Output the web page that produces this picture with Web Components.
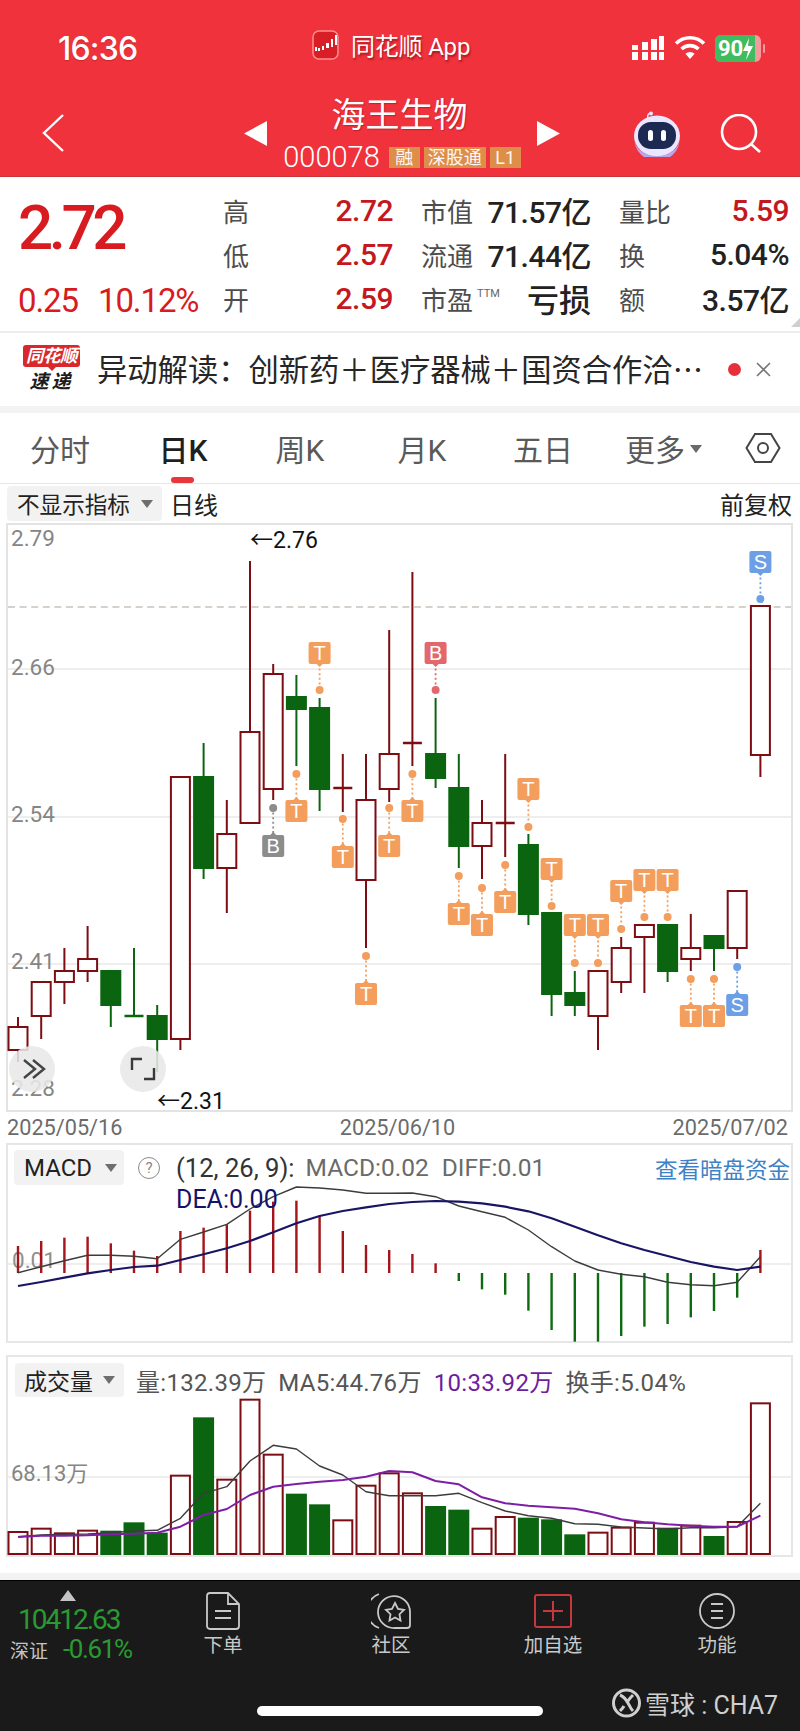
<!DOCTYPE html>
<html lang="zh">
<head>
<meta charset="utf-8">
<title>海王生物</title>
<style>
    html, body { margin: 0; padding: 0; background: #fff; }
    body {
        width: 800px;
        height: 1731px;
        overflow: hidden;
        font-family: Roboto, "Noto Sans CJK SC", sans-serif;
        color: #222;
    }
    .strip { display: block; height: 7px; background: #f3f3f3; }
    .gap { display: block; height: 15px; }
</style>
</head>
<body>
<stock-header></stock-header>
<quote-panel></quote-panel>
<news-ticker>异动解读：创新药＋医疗器械＋国资合作洽…</news-ticker>
<div class="strip"></div>
<period-tabs></period-tabs>
<chart-toolbar></chart-toolbar>
<kline-chart></kline-chart>
<date-axis></date-axis>
<macd-chart></macd-chart>
<volume-chart></volume-chart>
<div class="gap"></div>
<div class="strip"></div>
<bottom-nav></bottom-nav>

<script>
const FONT = 'Roboto, "Noto Sans CJK SC", sans-serif';
const UP = '#7c0d12';
const DOWN = '#0b640f';

const xAt = i => 18 + 23.2 * i;

function define(name, html) {
    customElements.define(name, class extends HTMLElement {
        constructor() {
            super();
            this.attachShadow({mode: 'open'}).innerHTML = typeof html === 'function' ? html(this) : html;
        }
    });
}

define('dropdown-pill', `
<style>
    :host {
        display: inline-flex;
        align-items: center;
        justify-content: space-between;
        box-sizing: border-box;
        padding: 0 9px 0 10px;
        background: #f2f2f2;
        border-radius: 4px;
        color: #222;
        font-size: 22.6px;
        white-space: nowrap;
    }
    i {
        flex: none;
        width: 0; height: 0;
        border-left: 6px solid transparent;
        border-right: 6px solid transparent;
        border-top: 8px solid #6e6e6e;
    }
</style>
<slot></slot><i></i>`);

define('stock-header', `
<style>
    :host {
        display: block;
        height: 177px;
        box-sizing: border-box;
        background: #ef323c;
        border-bottom: 1px solid #c9363c;
        color: #fff;
    }
    .status {
        height: 88px;
        display: grid;
        grid-template-columns: 254px 1fr auto;
        align-items: center;
        padding: 8px 35px 0 58px;
        box-sizing: border-box;
    }
    .time { font: 500 32px Inter, ${FONT}; letter-spacing: -.8px; text-shadow: 0 1px 1px rgba(120,0,0,.3); }
    .app { display: flex; align-items: center; gap: 12px; font-size: 24px; text-shadow: 1px 2px 2px rgba(110,0,0,.55); margin-top: -7px; }
    .app span { letter-spacing: -.2px; }
    .right { display: flex; justify-content: flex-end; align-items: center; gap: 9px; }
    .nav {
        height: 88px;
        display: grid;
        grid-template-columns: 244px 23px 270px 23px 1fr;
    }
    .back { padding: 25px 0 0 41px; }
    .tri { align-self: start; margin-top: 33px; }
    .mid { display: flex; flex-direction: column; align-items: center; }
    .name { font-size: 34px; line-height: 40px; margin: 7px 5px 0 0; text-shadow: 1px 1px 1px rgba(110,0,0,.35); }
    .code { display: flex; align-items: center; gap: 4px; margin-top: 9px; font-size: 29px; font-weight: 300; line-height: 26px; white-space: nowrap; }
    .code b {
        font: 400 18px ${FONT};
        background: #dd924a;
        width: 31px;
        height: 21px;
        line-height: 21px;
        text-align: center;
        opacity: .96;
    }
    .code b:first-of-type { margin-left: 5px; }
    .code b.wide { width: 62px; }
    .tools { display: flex; padding: 23px 0 0 72px; gap: 38px; align-items: flex-start; }
    .tools svg:last-child { margin-top: 3px; }
</style>
<div class="status">
    <div class="time">16:36</div>
    <div class="app">
        <svg width="27" height="30" viewBox="0 0 27 30">
            <rect x="1" y="1" width="25" height="28" rx="6" fill="#d81e26" stroke="#ff8e8e" stroke-width="1.5"/>
            <g fill="#fff"><rect x="3" y="17" width="2" height="4"/><rect x="6" y="18" width="2" height="3"/><rect x="10" y="16" width="2" height="4"/><rect x="14" y="13" width="3" height="5"/><rect x="19" y="9" width="2" height="8"/><rect x="23" y="5" width="2" height="10"/></g>
        </svg>
        <span>同花顺 App</span>
    </div>
    <div class="right">
        <svg width="34" height="26" viewBox="0 0 34 26" fill="#fff">
            <rect x="1" y="17" width="6" height="8"/><rect x="1" y="10" width="6" height="5"/>
            <rect x="11" y="17" width="6" height="8"/><rect x="11" y="7" width="6" height="8"/>
            <rect x="20" y="17" width="6" height="8"/><rect x="20" y="4" width="6" height="11"/>
            <rect x="28" y="17" width="5" height="8"/><rect x="28" y="1" width="5" height="14"/>
        </svg>
        <svg width="32" height="26" viewBox="0 0 32 26" fill="none" stroke="#fff" stroke-width="3.6">
            <path d="M2 8.5a20 20 0 0 1 28 0"/><path d="M7.5 14a12.5 12.5 0 0 1 17 0"/><path d="M16 24l-4.6-5.2a6.6 6.6 0 0 1 9.2 0z" fill="#fff" stroke="none"/>
        </svg>
        <svg width="50" height="27" viewBox="0 0 50 27">
            <rect x="0" y="0" width="46" height="27" rx="6" fill="#f49a9c"/>
            <path d="M6 0h34v27H6a6 6 0 0 1-6-6V6a6 6 0 0 1 6-6z" fill="#3fbc60"/>
            <text x="3" y="21" font-family="Roboto" font-weight="700" font-size="22" fill="#fff">90</text>
            <path d="M34 3l-6 13h5l-2 9 7-14h-5z" fill="#fff"/>
            <rect x="48" y="9" width="2" height="9" rx="1" fill="#f49a9c"/>
        </svg>
    </div>
</div>
<div class="nav">
    <div class="back">
        <svg width="24" height="40" viewBox="0 0 24 40" fill="none" stroke="#fff" stroke-width="2.4"><path d="M22 2L3 20l19 18"/></svg>
    </div>
    <svg class="tri" width="23" height="25" viewBox="0 0 23 25"><path d="M23 0v25L0 12.500z" fill="#fff"/></svg>
    <div class="mid">
        <div class="name">海王生物</div>
        <div class="code">000078<b>融</b><b class="wide">深股通</b><b>L1</b></div>
    </div>
    <svg class="tri" width="23" height="25" viewBox="0 0 23 25"><path d="M0 0v25l23-12.500z" fill="#fff"/></svg>
    <div class="tools">
        <svg width="50" height="46" viewBox="0 0 50 46">
            <path d="M17 10c-2-3-2-7 1-8" fill="none" stroke="#e8e4ff" stroke-width="1.500"/>
            <circle cx="19" cy="2.500" r="2" fill="#e8e4ff"/>
            <ellipse cx="25" cy="25" rx="23" ry="20.500" fill="#ebe6ff"/>
            <path d="M2 27a23 18 0 0 0 46 0 23 23 0 0 1-46 0z" fill="#b6a8ee"/>
            <rect x="6" y="11" width="38" height="27" rx="13" fill="#1c2a52"/>
            <rect x="16" y="19" width="5" height="11" rx="2.500" fill="#fff"/>
            <rect x="29" y="19" width="5" height="11" rx="2.500" fill="#fff"/>
        </svg>
        <svg width="42" height="40" viewBox="0 0 42 40" fill="none" stroke="#fff" stroke-width="2.600"><circle cx="19" cy="18" r="17"/><path d="M31 30l9 8"/></svg>
    </div>
</div>`);

define('quote-cell', el => `
<style>
    :host { display: flex; justify-content: space-between; align-items: center; white-space: nowrap; }
    .l { font-size: 26px; color: #4d4d4d; }
    .v { font-size: 30px; font-weight: 500; color: ${el.getAttribute('tone') === 'up' ? '#c4171e' : '#222'}; letter-spacing: -.5px; }
</style>
<span class="l"><slot name="label"></slot></span><span class="v"><slot></slot></span>`);

define('quote-panel', `
<style>
    :host {
        display: grid;
        grid-template-columns: 223px 1fr;
        height: 156px;
        box-sizing: border-box;
        border-bottom: 2px solid #ededed;
        position: relative;
    }
    .price { padding: 13px 0 0 18px; color: #d81b20; white-space: nowrap; }
    .big { font-size: 62px; font-weight: 500; line-height: 76px; letter-spacing: -4.500px; }
    .sub { display: flex; gap: 20px; font-size: 33px; margin-top: 15px; line-height: 40px; letter-spacing: -1.100px; }
    .grid {
        display: grid;
        grid-template-columns: 170px 170px 170px;
        grid-auto-rows: 44px;
        column-gap: 28px;
        padding-top: 11px;
    }
    sup { font-size: 11px; line-height: 0; vertical-align: 13px; margin-left: 4px; color: #666; }
    .loss { font-size: 32px; letter-spacing: 0; }
    .corner { position: absolute; right: 0; bottom: 4px; width: 0; height: 0; border-left: 9px solid transparent; border-bottom: 9px solid #cfcfcf; }
</style>
<div class="price">
    <div class="big">2.72</div>
    <div class="sub"><span>0.25</span><span>10.12%</span></div>
</div>
<div class="grid">
    <quote-cell tone="up"><span slot="label">高</span>2.72</quote-cell>
    <quote-cell><span slot="label">市值</span>71.57亿</quote-cell>
    <quote-cell tone="up"><span slot="label">量比</span>5.59</quote-cell>
    <quote-cell tone="up"><span slot="label">低</span>2.57</quote-cell>
    <quote-cell><span slot="label">流通</span>71.44亿</quote-cell>
    <quote-cell><span slot="label">换</span>5.04%</quote-cell>
    <quote-cell tone="up"><span slot="label">开</span>2.59</quote-cell>
    <quote-cell><span slot="label">市盈<sup>TTM</sup></span><span class="loss">亏损</span></quote-cell>
    <quote-cell><span slot="label">额</span>3.57亿</quote-cell>
</div>
<div class="corner"></div>`);

define('news-ticker', `
<style>
    :host {
        display: flex;
        align-items: center;
        height: 73px;
        padding-left: 23px;
        box-sizing: border-box;
        white-space: nowrap;
    }
    .logo { width: 57px; text-align: center; margin-right: 17px; margin-top: -2px; }
    .logo b { display: block; font-style: italic; }
    .top { position: relative; background: #d9282c; color: #fff; font-size: 17.500px; line-height: 22px; border-radius: 3px; height: 22px; letter-spacing: -.5px; }
    .top::after { content: ""; position: absolute; left: 25px; bottom: -4px; border-left: 4px solid transparent; border-right: 4px solid transparent; border-top: 4px solid #d9282c; }
    .bot { color: #1c1c1c; font-size: 19px; line-height: 21px; margin-top: 4px; letter-spacing: 3px; }
    .text { font: 30.300px "Noto Sans CJK SC", sans-serif; color: #262626; width: 631px; overflow: hidden; margin-top: -4px; }
    .dot { width: 13px; height: 13px; border-radius: 50%; background: #e8303a; margin: 0 15px 0 0; }
    svg { display: block; }
</style>
<div class="logo"><b class="top">同花顺</b><b class="bot">速递</b></div>
<div class="text"><slot></slot></div>
<div class="dot"></div>
<svg width="15" height="15" viewBox="0 0 15 15" fill="none" stroke="#777" stroke-width="1.600"><path d="M1 1l13 13M14 1L1 14"/></svg>`);

define('period-tabs', `
<style>
    :host {
        display: grid;
        grid-template-columns: 120px 120px 120px 124px 118px 123px 75px;
        height: 71px;
        box-sizing: border-box;
        border-bottom: 1px solid #e6e6e6;
        position: relative;
        font-size: 30px;
        color: #5a5a5a;
    }
    div { display: flex; align-items: center; justify-content: center; padding-bottom: 1px; }
    .on { color: #1f1f1f; font-weight: 500; position: relative; left: 3px; }
    .on::after {
        content: "";
        position: absolute;
        left: 50%;
        bottom: 0;
        width: 23px;
        height: 6px;
        margin-left: -12px;
        border-radius: 3px;
        background: #e8363c;
    }
    .more { gap: 5px; }
    .more i { width: 0; height: 0; border-left: 6px solid transparent; border-right: 6px solid transparent; border-top: 8px solid #6a6a6a; margin-top: 3px; }
</style>
<div>分时</div>
<div class="on">日K</div>
<div>周K</div>
<div>月K</div>
<div>五日</div>
<div class="more">更多<i></i></div>
<div>
    <svg width="36" height="30" viewBox="0 0 36 30" fill="none" stroke="#444" stroke-width="2"><path d="M10 1h16l8.500 14L26 29H10L1.500 15z"/><circle cx="18" cy="15" r="5"/></svg>
</div>`);

define('chart-toolbar', `
<style>
    :host {
        display: flex;
        align-items: center;
        height: 39px;
        padding: 2px 8px 2px 7px;
        box-sizing: border-box;
        font-size: 24px;
        color: #222;
    }
    dropdown-pill { width: 155px; height: 35px; }
    .line { margin-left: 8px; flex: 1; }
</style>
<dropdown-pill>不显示指标</dropdown-pill>
<span class="line">日线</span>
<span>前复权</span>`);

// one candle per trading day: direction, wick top, body top, body bottom, wick bottom
const CANDLES = [
    ['u',1017,1027,1050,1062],['u',982,982,1016,1039],['u',948,971,982,1004],['u',926,959,971,982],
    ['d',971,971,1005,1027],['d',948,1016,1016,1016],['d',1005,1016,1039,1072],['u',777,777,1039,1050],
    ['d',743,777,868,879],['u',800,834,868,913],['u',561,732,823,823],['u',664,674,789,800],
    ['d',675,697,709,766],['d',698,708,789,811],['u',754,788,788,812],['u',754,800,880,948],
    ['u',630,754,789,802],['u',572,743,743,766],['d',698,754,778,788],['d',754,788,846,868],
    ['u',800,823,846,879],['u',754,823,823,857],['d',834,845,914,925],['d',913,913,994,1016],
    ['d',971,993,1005,1016],['u',971,971,1016,1050],['u',937,948,982,993],['u',925,925,937,993],
    ['d',925,925,971,982],['u',914,948,959,971],['d',936,936,948,971],['u',891,891,948,959],
    ['u',606,606,755,777]
];

// trade marks: candle, letter, colour, dot y, label top
const ORANGE = '#f39e5c', RED_M = '#e2686b', GREY_M = '#8c8c8c', BLUE_M = '#6d9fe6';
const MARKS = [
    [13,'T',ORANGE,690,642],[11,'B',GREY_M,808,835],[12,'T',ORANGE,774,800],[14,'T',ORANGE,819,846],
    [16,'T',ORANGE,808,835],[15,'T',ORANGE,956,983],[18,'B',RED_M,690,642],[17,'T',ORANGE,774,800],
    [19,'T',ORANGE,876,903],[20,'T',ORANGE,888,914],[21,'T',ORANGE,865,891],[22,'T',ORANGE,827,778],
    [23,'T',ORANGE,906,858],[24,'T',ORANGE,963,914],[25,'T',ORANGE,963,914],[26,'T',ORANGE,929,880],
    [27,'T',ORANGE,917,869],[28,'T',ORANGE,917,869],[29,'T',ORANGE,979,1005],[30,'T',ORANGE,979,1005],
    [31,'S',BLUE_M,967,994],[32,'S',BLUE_M,599,551]
];

function candleSvg(c, i) {
    const [dir, wt, bt, bb, wb] = c;
    const x = xAt(i), col = dir === 'u' ? UP : DOWN;
    let s = '';
    if (bt === bb) {
        s += `<path d="M${x} ${wt}V${wb}" stroke="${col}" stroke-width="2"/>`;
        s += `<path d="M${x - 9.5} ${bt}H${x + 9.5}" stroke="${col}" stroke-width="2.5"/>`;
        return s;
    }
    if (wt < bt) s += `<path d="M${x} ${wt}V${bt}" stroke="${col}" stroke-width="2"/>`;
    if (wb > bb) s += `<path d="M${x} ${bb}V${wb}" stroke="${col}" stroke-width="2"/>`;
    s += `<rect x="${x - 9.5}" y="${bt}" width="19" height="${bb - bt}" fill="${dir === 'u' ? '#fff' : DOWN}" stroke="${col}" stroke-width="2"/>`;
    return s;
}

function markSvg(m) {
    const [i, letter, col, dotY, top] = m;
    const x = xAt(i), above = top < dotY;
    const lineFrom = above ? top + 22 : dotY, lineTo = above ? dotY : top;
    const notch = above
        ? `M${x - 3} ${top + 22}h6l-3 3z`
        : `M${x - 3} ${top}h6l-3 -3z`;
    return `<path d="M${x} ${lineFrom}V${lineTo}" stroke="${col}" stroke-width="1.800" stroke-dasharray="2 2.600"/>
        <circle cx="${x}" cy="${dotY}" r="4" fill="${col}"/>
        <rect x="${x - 11}" y="${top}" width="22" height="22" rx="2" fill="${col}"/>
        <path d="${notch}" fill="${col}"/>
        <text x="${x}" y="${top + 18}" text-anchor="middle" font-size="20" fill="#fff" font-family="Liberation Sans">${letter}</text>`;
}

define('kline-chart', () => {
    const grid = [669, 817, 964].map(y => `<path d="M8 ${y}H791" stroke="#e8e8e8" stroke-width="1.500"/>`).join('');
    const prices = [['2.79',546],['2.66',675],['2.54',822],['2.41',969],['2.28',1096]]
        .map(p => `<text x="11" y="${p[1]}" font-size="22.500" fill="#858585">${p[0]}</text>`).join('');
    return `
<style>
    :host { display: block; height: 589px; }
    svg { display: block; overflow: visible; font-family: ${FONT}; }
</style>
<svg width="800" height="589" viewBox="0 523 800 589">
    <rect x="7" y="524" width="785" height="587" fill="#fff" stroke="#e3e3e3" stroke-width="2"/>
    ${grid}
    <path d="M8 607H791" stroke="#c9c2bb" stroke-width="1.300" stroke-dasharray="7 4.600"/>
    ${prices}
    ${CANDLES.map(candleSvg).join('')}
    ${MARKS.map(markSvg).join('')}
    <text x="250" y="548" font-size="23" fill="#111">←2.76</text>
    <text x="157" y="1109" font-size="23" fill="#111">←2.31</text>
    <circle cx="32" cy="1069" r="23" fill="#e8e8e8" fill-opacity=".88"/>
    <path d="M24 1060l11 9-11 9M33 1060l11 9-11 9" fill="none" stroke="#444" stroke-width="2.400"/>
    <circle cx="143" cy="1069" r="23" fill="#e8e8e8" fill-opacity=".88"/>
    <path d="M132 1070v-11h10M154 1068v11h-10" fill="none" stroke="#3a3a3a" stroke-width="2.400"/>
</svg>`;
});

define('date-axis', `
<style>
    :host {
        display: flex;
        justify-content: space-between;
        align-items: center;
        height: 31px;
        padding: 0 12px 0 7px;
        box-sizing: border-box;
        font-size: 21.700px;
        color: #6b6b6b;
    }
</style>
<span>2025/05/16</span><span>2025/06/10</span><span>2025/07/02</span>`);

const MACD_TOP = [348,333,323,320,340,362,378,303,293,283,242,215,212,258,303,345,360,372,400,
    453,478,494,542,600,635,635,618,590,582,562,543,503,360];
const MACD_DIFF = [428,410,392,376,376,379,386,328,306,283,237,200,171,174,180,190,190,189,200,228,245,262,300,350,393,420,433,440,457,464,467,457,380];
const MACD_DEA = [468,456,443,430,420,411,407,390,373,355,333,307,280,258,243,232,222,216,213,215,220,230,244,265,290,316,340,360,378,396,410,420,410];

const polyline = (ys, map, col, w) =>
    `<polyline fill="none" stroke="${col}" stroke-width="${w}" stroke-linejoin="round" points="${ys.map((v, i) => `${xAt(i).toFixed(1)},${map(v).toFixed(1)}`).join(' ')}"/>`;

define('macd-chart', () => {
    const ym = v => 1130 + v / 3;
    const bars = MACD_TOP.map((t, i) => {
        const x = xAt(i);
        const green = i >= 19 && i < 32;
        return green
            ? `<path d="M${x} 1273V${ym(t)}" stroke="#0e6a10" stroke-width="2.400"/>`
            : `<path d="M${x} ${ym(t)}V1273" stroke="#a5141a" stroke-width="2.400"/>`;
    }).join('');
    return `
<style>
    :host { display: block; position: relative; height: 200px; }
    svg { display: block; font-family: ${FONT}; }
    .legend {
        position: absolute;
        left: 14px; right: 10px; top: 7px;
        display: flex;
        align-items: center;
        height: 35px;
        font-size: 24.500px;
        color: #6a6a6a;
        white-space: nowrap;
    }
    dropdown-pill { width: 110px; height: 35px; padding-right: 7px; font-size: 24px; }
    .q { width: 20px; height: 20px; border: 1.500px solid #8a8a8a; border-radius: 50%; color: #888; font-size: 15px; line-height: 20px; text-align: center; margin: 0 16px 0 14px; }
    .p { color: #333; margin-right: 11px; font-size: 25.600px; }
    .m { margin-right: 13px; }
    .link { margin-left: auto; color: #3f82c4; font-size: 22.500px; }
    .dea { position: absolute; left: 176px; top: 42px; font-size: 25px; color: #15126a; }
</style>
<svg width="800" height="200" viewBox="0 1143 800 200">
    <rect x="7" y="1144" width="785" height="198" fill="#fff" stroke="#e6e6e6" stroke-width="2"/>
    <path d="M8 1264H791" stroke="#e8e8e8" stroke-width="1.500"/>
    <text x="12" y="1268" font-size="22.500" fill="#8f8f8f">0.01</text>
    ${bars}
    ${polyline(MACD_DIFF, ym, '#3c3c3c', 1.4)}
    ${polyline(MACD_DEA, ym, '#1a1464', 2.2)}
</svg>
<div class="legend">
    <dropdown-pill>MACD</dropdown-pill>
    <span class="q">?</span>
    <span class="p">(12, 26, 9):</span>
    <span class="m">MACD:0.02</span>
    <span>DIFF:0.01</span>
    <span class="link">查看暗盘资金</span>
</div>
<div class="dea">DEA:0.00</div>`;
});

const VOL_TOP = [546,536,550,542,542,517,548,377,202,389,149,314,431,463,511,407,370,430,468,479,536,501,503,508,553,548,533,518,533,527,558,516,160];
const VOL_MA5 = [560,555,553,552,548,543,541,505,430,410,333,286,297,348,375,425,437,437,437,430,458,483,497,505,521,523,531,534,537,533,533,530,460];
const VOL_MA10 = [561,557,557,556,553,551,548,530,495,477,435,410,402,395,390,380,363,367,393,403,442,460,467,472,476,490,508,517,523,527,530,530,497];

define('volume-chart', () => {
    const yv = v => 1350 + v / 3;
    const bars = VOL_TOP.map((t, i) => {
        const x = xAt(i), dir = CANDLES[i][0];
        const top = yv(t);
        return dir === 'd'
            ? `<rect x="${x - 10.5}" y="${top}" width="21" height="${1555 - top}" fill="${DOWN}"/>`
            : `<rect x="${x - 9.5}" y="${top}" width="19" height="${1554 - top}" fill="#fff" stroke="${UP}" stroke-width="2"/>`;
    }).join('');
    return `
<style>
    :host { display: block; position: relative; height: 203px; margin-top: 12px; }
    svg { display: block; font-family: ${FONT}; }
    .legend {
        position: absolute;
        left: 15px; top: 8px;
        display: flex;
        align-items: center;
        height: 34px;
        font-size: 24px;
        letter-spacing: .3px;
        color: #555;
        white-space: nowrap;
        gap: 12px;
    }
    dropdown-pill { width: 109px; height: 34px; padding: 0 9px; font-size: 23px; letter-spacing: 0; }
    .purple { color: #6f1d9c; }
</style>
<svg width="800" height="203" viewBox="0 1355 800 203">
    <rect x="7" y="1356" width="785" height="200" fill="#fff" stroke="#e6e6e6" stroke-width="2"/>
    <path d="M8 1477H791" stroke="#e8e8e8" stroke-width="1.500"/>
    <text x="11" y="1481" font-size="22" fill="#858585">68.13万</text>
    ${bars}
    ${polyline(VOL_MA5, yv, '#3c3c3c', 1.4)}
    ${polyline(VOL_MA10, yv, '#7d1fa6', 2)}
</svg>
<div class="legend">
    <dropdown-pill>成交量</dropdown-pill>
    <span>量:132.39万</span>
    <span>MA5:44.76万</span>
    <span class="purple">10:33.92万</span>
    <span>换手:5.04%</span>
</div>`;
});

define('nav-item', `
<style>
    :host { display: flex; flex-direction: column; align-items: center; color: #c9c9c9; font-size: 19.500px; padding-top: 10px; }
    .icon { height: 40px; display: flex; align-items: center; }
    .label { margin-top: 0; line-height: 30px; }
</style>
<div class="icon"><slot name="icon"></slot></div>
<div class="label"><slot></slot></div>`);

define('bottom-nav', `
<style>
    :host {
        display: block;
        height: 151px;
        background: #1a1a1a;
        border-top: 1px solid #000;
        box-sizing: border-box;
        position: relative;
    }
    .row { display: grid; grid-template-columns: 140px 166px 170px 154px 174px; }
    .index { padding: 9px 0 0 10px; color: #2a9a32; white-space: nowrap; }
    .tri { width: 0; height: 0; margin: 0 0 3px 50px; border-left: 8px solid transparent; border-right: 8px solid transparent; border-bottom: 11px solid #c4c4c4; }
    .val { font-size: 28px; letter-spacing: -2px; line-height: 32px; margin-left: 8px; }
    .idx { display: flex; align-items: baseline; margin-top: -3px; line-height: 32px; }
    .idx span { color: #c4c4c4; font-size: 19px; width: 53px; }
    .idx b { font-weight: 400; font-size: 26px; letter-spacing: -1.400px; }
    .home { position: absolute; left: 257px; top: 125px; width: 286px; height: 10px; border-radius: 5px; background: #fff; }
    .mark { position: absolute; left: 612px; top: 104px; display: flex; align-items: center; gap: 4px; color: #cfcfcf; font-size: 25px; white-space: nowrap; }
</style>
<div class="row">
    <div class="index">
        <div class="tri"></div>
        <div class="val">10412.63</div>
        <div class="idx"><span>深证</span><b>-0.61%</b></div>
    </div>
    <nav-item>
        <svg slot="icon" width="34" height="38" viewBox="0 0 34 38" fill="none" stroke="#c9c9c9" stroke-width="1.800"><path d="M4 1h18l11 11v22a3 3 0 0 1-3 3H4a3 3 0 0 1-3-3V4a3 3 0 0 1 3-3z"/><path d="M22 1v11h11M9 19h16M9 26h16"/></svg>
        下单
    </nav-item>
    <nav-item>
        <svg slot="icon" width="40" height="38" viewBox="0 0 40 38" fill="none" stroke="#c9c9c9" stroke-width="1.800"><path d="M8 36A18 18 0 0 1 8 2"/><path d="M24 36a16 16 0 1 1 15-16v13a3 3 0 0 1-3 3z"/><path d="M24 11l3 6 6 .8-4.500 4.400 1 6.300-5.500-3-5.500 3 1-6.300L15 17.800l6-.8z"/></svg>
        社区
    </nav-item>
    <nav-item>
        <svg slot="icon" width="38" height="34" viewBox="0 0 38 34" fill="none" stroke="#c6383c" stroke-width="2"><rect x="1" y="1" width="36" height="32" rx="2"/><path d="M19 7v20M9 17h20"/></svg>
        加自选
    </nav-item>
    <nav-item>
        <svg slot="icon" width="36" height="36" viewBox="0 0 36 36" fill="none" stroke="#c9c9c9" stroke-width="1.800"><circle cx="18" cy="18" r="17"/><path d="M12 11h12M12 18h12M12 25h12"/></svg>
        功能
    </nav-item>
</div>
<div class="home"></div>
<div class="mark">
    <svg width="29" height="30" viewBox="0 0 29 30" fill="none" stroke="#cfcfcf" stroke-width="3"><circle cx="14.500" cy="15" r="13"/><path d="M8 7c8 3 8 11 13 16M21 7c-3 3-5 5-6 8M8 23c2-2 3-3 4-5"/></svg>
    <span>雪球 : CHA7</span>
</div>`);
</script>
</body>
</html>
